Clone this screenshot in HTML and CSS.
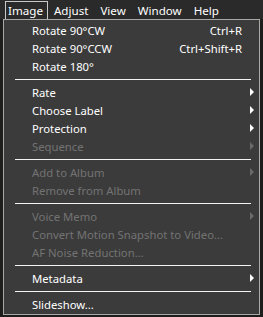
FILE: index.html
```html
<!DOCTYPE html>
<html lang="en">
<head>
  <meta charset="UTF-8">
  <title>Image menu</title>
  <link rel="stylesheet" href="styles.css">
</head>
<body>
  <div class="menubar">
    <div class="bar-item open">Image</div>
    <div class="bar-item">Adjust</div>
    <div class="bar-item">View</div>
    <div class="bar-item">Window</div>
    <div class="bar-item">Help</div>
  </div>

  <div class="menu">
    <div class="item"><span class="label">Rotate 90°CW</span><span class="key">Ctrl+R</span><span class="sub"></span></div>
    <div class="item"><span class="label">Rotate 90°CCW</span><span class="key">Ctrl+Shift+R</span><span class="sub"></span></div>
    <div class="item"><span class="label">Rotate 180°</span><span class="sub"></span></div>
    <div class="sep"></div>
    <div class="item"><span class="label">Rate</span><span class="sub arrow"></span></div>
    <div class="item"><span class="label">Choose Label</span><span class="sub arrow"></span></div>
    <div class="item"><span class="label">Protection</span><span class="sub arrow"></span></div>
    <div class="item disabled"><span class="label">Sequence</span><span class="sub arrow"></span></div>
    <div class="sep"></div>
    <div class="item disabled"><span class="label">Add to Album</span><span class="sub arrow"></span></div>
    <div class="item disabled"><span class="label">Remove from Album</span><span class="sub"></span></div>
    <div class="sep"></div>
    <div class="item disabled"><span class="label">Voice Memo</span><span class="sub arrow"></span></div>
    <div class="item disabled"><span class="label">Convert Motion Snapshot to Video...</span><span class="sub"></span></div>
    <div class="item disabled"><span class="label">AF Noise Reduction...</span><span class="sub"></span></div>
    <div class="sep"></div>
    <div class="item"><span class="label">Metadata</span><span class="sub arrow"></span></div>
    <div class="sep"></div>
    <div class="item"><span class="label">Slideshow...</span><span class="sub"></span></div>
  </div>
</body>
</html>
```

FILE: styles.css
```css
body {
  margin: 0;
  background-color: #1e1f1c;
  font-family: "Noto Sans", "Open Sans", sans-serif;
  font-size: 11.3px;
  color: #ffffff;
}
.menubar {
  display: flex;
  height: 19px;
  padding-left: 5px;
  background-color: #2a2a2a;
  font-size: 11.6px;
}
.bar-item {
  padding: 0 5px;
  border: 1px solid transparent;
  border-bottom: none;
  margin-top: 1px;
  line-height: 17px;
}
.bar-item.open {
  border-color: #c8c8c8;
  padding: 0 4px 0 2px;
}
.menu {
  width: 255px;
  margin-left: 3px;
  padding: 1px 0;
  background-color: #3b3b3b;
  border: 1px solid #a8a8a8;
}
.item {
  display: flex;
  align-items: center;
  height: 18px;
  padding-left: 28px;
  padding-right: 3px;
}
.label {
  flex: 1;
  white-space: nowrap;
}
.key {
  padding-right: 8px;
}
.sub {
  width: 6px;
  height: 7px;
}
.arrow {
  width: 0;
  height: 0;
  margin-right: 2px;
  margin-left: 4px;
  border-top: 4px solid transparent;
  border-bottom: 4px solid transparent;
  border-left: 4px solid #ffffff;
}
.disabled {
  color: #737373;
}
.disabled .arrow {
  border-left-color: #6a6a6a;
}
.sep {
  height: 1px;
  margin: 4px 8px 3px 11px;
  background-color: #f4f4f4;
}
```
